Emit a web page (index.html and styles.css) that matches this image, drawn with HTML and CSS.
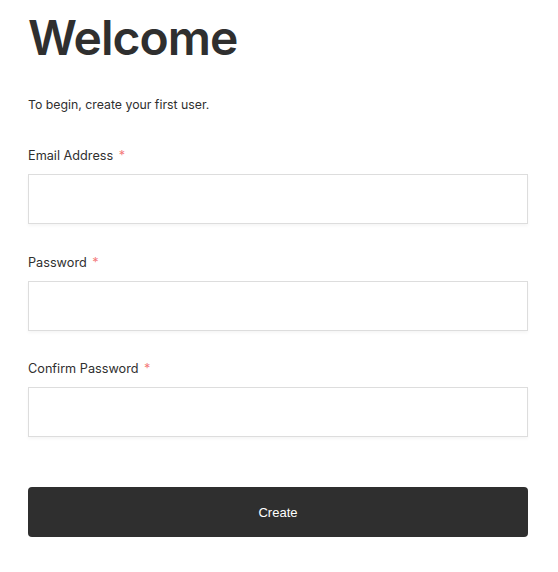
FILE: index.html
```html
<!DOCTYPE html>
<html lang="en">
<head>
<meta charset="utf-8">
<title>Welcome</title>
<link rel="stylesheet" href="styles.css">
</head>
<body>
<main class="page">
  <h1 class="title">Welcome</h1>
  <p class="intro">To begin, create your first user.</p>
  <form class="form">
    <div class="field">
      <label class="label" for="email">Email Address <span class="req">*</span></label>
      <input class="input" id="email" type="email">
    </div>
    <div class="field">
      <label class="label" for="pw">Password <span class="req">*</span></label>
      <input class="input" id="pw" type="password">
    </div>
    <div class="field">
      <label class="label" for="pw2">Confirm Password <span class="req">*</span></label>
      <input class="input" id="pw2" type="password">
    </div>
    <button class="btn" type="button">Create</button>
  </form>
</main>
</body>
</html>
```
FILE: styles.css
```css
* { box-sizing: border-box; }
html, body { margin: 0; padding: 0; background: #fff; }
body {
  font-family: Inter, "Noto Sans", sans-serif;
  color: #2f2f2f;
}
.page {
  width: 500px;
  margin-left: 28px;
  padding-top: 14px;
}
.title {
  margin: 0;
  font-size: 48px;
  line-height: 48px;
  font-weight: 600;
  letter-spacing: -1px;
  color: #2f2f2f;
}
.intro {
  margin: 33px 0 0;
  font-size: 12.3px;
  line-height: 20px;
}
.form {
  display: flex;
  flex-direction: column;
  margin-top: 31px;
}
.field {
  display: flex;
  flex-direction: column;
  margin-bottom: 28.5px;
}
.label {
  font-size: 12.7px;
  line-height: 20px;
  margin-bottom: 8px;
}
.req {
  color: #f47a7a;
  margin-left: 2px;
}
.input {
  height: 50px;
  width: 100%;
  border: 1px solid #dddddd;
  background: #fff;
  box-shadow: 0 2px 3px rgba(0,0,0,0.04);
  border-radius: 0;
  outline: none;
  font: inherit;
}
.btn {
  margin-top: 21.5px;
  height: 50px;
  width: 100%;
  border: none;
  border-radius: 4px;
  background: #2f2f2f;
  color: #fff;
  font-family: "Liberation Sans", Arial, sans-serif;
  font-size: 13px;
  cursor: pointer;
}
```
